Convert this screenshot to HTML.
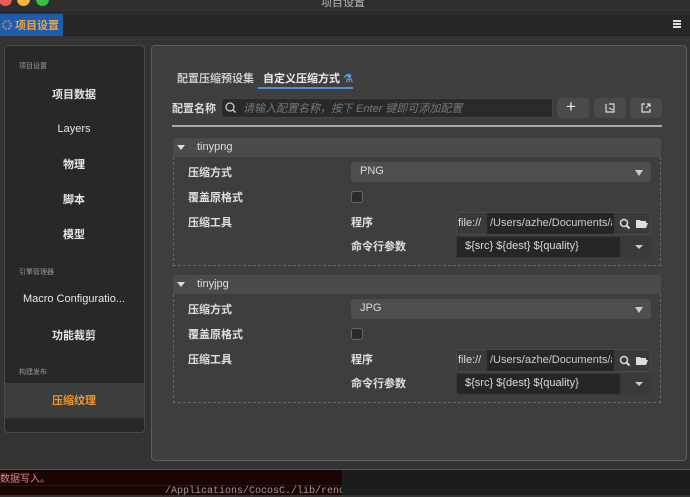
<!DOCTYPE html>
<html><head><meta charset="utf-8"><style>
*{margin:0;padding:0;box-sizing:border-box}
body{width:690px;height:495px;overflow:hidden;background:#333;font-family:"Liberation Sans","Noto Sans CJK SC",sans-serif;font-size:11px;color:#ddd;position:relative}
.a{position:absolute}
.t{white-space:nowrap}
.lab{position:absolute;font-size:7px;color:#999;left:19px}
.it{position:absolute;left:4px;width:140px;text-align:center;font-size:11px;color:#e6e6e6;font-weight:bold}
.btn{position:absolute;top:98px;width:32px;height:20px;background:#4a4a4a;border-radius:3px}
.sec{position:absolute;left:173px;width:488px}
.hd{position:absolute;left:0;top:0;width:488px;height:19px;background:#4b4b4b;border-radius:3px 3px 0 0}
.bd{position:absolute;left:0;top:19px;width:488px;border:1px dashed #666;border-top:none}
.fl{position:absolute;font-weight:bold;color:#e0e0e0;font-size:11px}
</style></head><body>
<div class="a" style="left:0;top:0;width:690px;height:13px;background:#2f2f2f;border-bottom:1px solid #222"></div>
<div class="a" style="left:-1px;top:-7px;width:13px;height:13px;border-radius:50%;background:#ee5b55"></div>
<div class="a" style="left:17px;top:-7px;width:13px;height:13px;border-radius:50%;background:#f6b73a"></div>
<div class="a" style="left:36px;top:-7px;width:13px;height:13px;border-radius:50%;background:#34c148"></div>
<div class="a t" style="left:321px;top:-6px;font-size:11px;color:#bbb">项目设置</div>
<div class="a" style="left:0;top:14px;width:690px;height:22px;background:#272727;border-bottom:1px solid #1e1e1e"></div>
<div class="a" style="left:0;top:14px;width:63px;height:22px;background:#1e5cad"></div>
<svg class="a" style="left:1px;top:19px" width="12" height="12"><circle cx="6" cy="6" r="4" fill="none" stroke="#888" stroke-width="2.5" stroke-dasharray="2 1.2"/><circle cx="6" cy="6" r="1.5" fill="#1e5cad"/></svg>
<div class="a t" style="left:15px;top:17px;font-size:11px;color:#f3a33a;font-weight:bold">项目设置</div>
<div class="a" style="left:673px;top:20px;width:8px;height:1.5px;background:#ddd;box-shadow:0 3px 0 #ddd,0 6px 0 #ddd"></div>
<div class="a" style="left:4px;top:45px;width:141px;height:388px;background:#282828;border:1px solid #4a4a4a;border-radius:4px"></div>
<div class="a" style="left:5px;top:383px;width:139px;height:35px;background:#3c3d3d"></div>
<div class="lab" style="top:61px">项目设置</div>
<div class="it" style="top:86px">项目数据</div>
<div class="it" style="top:123px;font-weight:normal">Layers</div>
<div class="it" style="top:156px">物理</div>
<div class="it" style="top:191px">脚本</div>
<div class="it" style="top:226px">模型</div>
<div class="lab" style="top:267px">引擎管理器</div>
<div class="it" style="top:293px;font-weight:normal">Macro Configuratio...</div>
<div class="it" style="top:327px">功能裁剪</div>
<div class="lab" style="top:367px">构建发布</div>
<div class="it" style="top:392px;color:#f0962c">压缩纹理</div>
<div class="a" style="left:151px;top:45px;width:536px;height:416px;background:#3e3e3e;border:1px solid #5e5e5e;border-radius:4px"></div>
<div class="a t" style="left:177px;top:70px;font-weight:bold;color:#ccc">配置压缩预设集</div>
<div class="a t" style="left:263px;top:70px;font-weight:bold;color:#eee">自定义压缩方式 <span style="color:#5b9bdf">⚗</span></div>
<div class="a" style="left:258px;top:87px;width:95px;height:2px;background:#4d8fd8"></div>
<div class="a t" style="left:172px;top:100px;font-weight:bold;color:#ddd">配置名称</div>
<div class="a" style="left:221px;top:98px;width:332px;height:20px;background:#2a2a2a;border:1px solid #444;border-radius:3px"></div>
<svg class="a" style="left:225px;top:102px" width="11" height="11"><circle cx="5" cy="5" r="4" fill="none" stroke="#ccc" stroke-width="1.3"/><path d="M8 8l2.5 2.5" stroke="#ccc" stroke-width="1.3"/></svg>
<div class="a t" style="left:243px;top:100px;color:#777;font-style:italic">请输入配置名称，按下 Enter 键即可添加配置</div>
<div class="btn" style="left:557px"></div><div class="a t" style="left:566px;top:97px;font-size:17px;color:#eee">+</div>
<div class="btn" style="left:594px"></div>
<svg class="a" style="left:604px;top:102px" width="12" height="12"><path d="M2 2v8h8V6M5 2h5v5M5 6l4 2" fill="none" stroke="#ddd" stroke-width="1.2"/></svg>
<div class="btn" style="left:630px"></div>
<svg class="a" style="left:640px;top:102px" width="12" height="12"><path d="M5 2H2v8h8V7M6 6l4-4M7 2h3v3" fill="none" stroke="#ddd" stroke-width="1.2"/></svg>
<div class="a" style="left:172px;top:125px;width:490px;height:2px;background:#aaa"></div>

<div class="sec" style="top:138px">
 <div class="hd"></div>
 <div class="a" style="left:4px;top:7px;width:0;height:0;border-left:4px solid transparent;border-right:4px solid transparent;border-top:5px solid #ddd"></div>
 <div class="a t" style="left:24px;top:3px;color:#ddd">tinypng</div>
 <div class="bd" style="height:109px"></div>
 <div class="fl t" style="left:15px;top:26px">压缩方式</div>
 <div class="a" style="left:178px;top:24px;width:300px;height:20px;background:#4e4e4e;border-radius:3px"></div>
 <div class="a t" style="left:187px;top:27px;color:#ddd">PNG</div>
 <div class="a" style="left:462px;top:32px;border-left:4px solid transparent;border-right:4px solid transparent;border-top:6px solid #ccc"></div>
 <div class="fl t" style="left:15px;top:51px">覆盖原格式</div>
 <div class="a" style="left:178px;top:53px;width:12px;height:12px;background:#2a2a2a;border:1px solid #666;border-radius:3px"></div>
 <div class="fl t" style="left:15px;top:76px">压缩工具</div>
 <div class="fl t" style="left:178px;top:76px">程序</div>
 <div class="a" style="left:283px;top:74px;width:195px;height:23px;background:#3a3a3a;border:1px solid #4a4a4a;border-radius:3px"></div>
 <div class="a t" style="left:285px;top:79px;color:#ddd">file://</div>
 <div class="a" style="left:314px;top:75px;width:127px;height:21px;background:#262626"></div>
 <div class="a t" style="left:317px;top:79px;color:#ccc;width:122px;overflow:hidden">/Users/azhe/Documents/a</div>
 <svg class="a" style="left:446px;top:80px" width="12" height="12"><circle cx="5" cy="5" r="3.5" fill="none" stroke="#ddd" stroke-width="1.5"/><path d="M7.5 7.5l3 3" stroke="#ddd" stroke-width="2"/></svg>
 <svg class="a" style="left:462px;top:80px" width="13" height="11"><path d="M1 2h4l1 1h5v2H3L1 10z M3 5h10l-2 5H1z" fill="#ddd"/></svg>
 <div class="fl t" style="left:178px;top:100px">命令行参数</div>
 <div class="a" style="left:283px;top:98px;width:195px;height:22px;background:#3a3a3a;border-radius:3px"></div>
 <div class="a" style="left:284px;top:99px;width:163px;height:20px;background:#262626"></div>
 <div class="a t" style="left:292px;top:102px;color:#ddd">${src} ${dest} ${quality}</div>
 <div class="a" style="left:462px;top:107px;border-left:4px solid transparent;border-right:4px solid transparent;border-top:4px solid #ccc"></div>
</div>
<div class="sec" style="top:275px">
 <div class="hd"></div>
 <div class="a" style="left:4px;top:7px;width:0;height:0;border-left:4px solid transparent;border-right:4px solid transparent;border-top:5px solid #ddd"></div>
 <div class="a t" style="left:24px;top:3px;color:#ddd">tinyjpg</div>
 <div class="bd" style="height:109px"></div>
 <div class="fl t" style="left:15px;top:26px">压缩方式</div>
 <div class="a" style="left:178px;top:24px;width:300px;height:20px;background:#4e4e4e;border-radius:3px"></div>
 <div class="a t" style="left:187px;top:27px;color:#ddd">JPG</div>
 <div class="a" style="left:462px;top:32px;border-left:4px solid transparent;border-right:4px solid transparent;border-top:6px solid #ccc"></div>
 <div class="fl t" style="left:15px;top:51px">覆盖原格式</div>
 <div class="a" style="left:178px;top:53px;width:12px;height:12px;background:#2a2a2a;border:1px solid #666;border-radius:3px"></div>
 <div class="fl t" style="left:15px;top:76px">压缩工具</div>
 <div class="fl t" style="left:178px;top:76px">程序</div>
 <div class="a" style="left:283px;top:74px;width:195px;height:23px;background:#3a3a3a;border:1px solid #4a4a4a;border-radius:3px"></div>
 <div class="a t" style="left:285px;top:79px;color:#ddd">file://</div>
 <div class="a" style="left:314px;top:75px;width:127px;height:21px;background:#262626"></div>
 <div class="a t" style="left:317px;top:79px;color:#ccc;width:122px;overflow:hidden">/Users/azhe/Documents/a</div>
 <svg class="a" style="left:446px;top:80px" width="12" height="12"><circle cx="5" cy="5" r="3.5" fill="none" stroke="#ddd" stroke-width="1.5"/><path d="M7.5 7.5l3 3" stroke="#ddd" stroke-width="2"/></svg>
 <svg class="a" style="left:462px;top:80px" width="13" height="11"><path d="M1 2h4l1 1h5v2H3L1 10z M3 5h10l-2 5H1z" fill="#ddd"/></svg>
 <div class="fl t" style="left:178px;top:100px">命令行参数</div>
 <div class="a" style="left:283px;top:98px;width:195px;height:22px;background:#3a3a3a;border-radius:3px"></div>
 <div class="a" style="left:284px;top:99px;width:163px;height:20px;background:#262626"></div>
 <div class="a t" style="left:292px;top:102px;color:#ddd">${src} ${dest} ${quality}</div>
 <div class="a" style="left:462px;top:107px;border-left:4px solid transparent;border-right:4px solid transparent;border-top:4px solid #ccc"></div>
</div>
<div class="a" style="left:0;top:469px;width:690px;height:1px;background:#555"></div>
<div class="a" style="left:0;top:470px;width:342px;height:25px;background:#1a0505"></div>
<div class="a" style="left:0;top:485px;width:342px;height:1px;background:#4a0a0a"></div>
<div class="a t" style="left:0;top:470px;font-size:10px;color:#d88">数据写入。</div>
<div class="a t" style="left:165px;top:486px;font-size:10px;color:#999;font-family:'Liberation Mono',monospace">/Applications/CocosC./lib/rende</div>
<div class="a" style="left:342px;top:470px;width:348px;height:25px;background:#1c1c1c"></div>
</body></html>
